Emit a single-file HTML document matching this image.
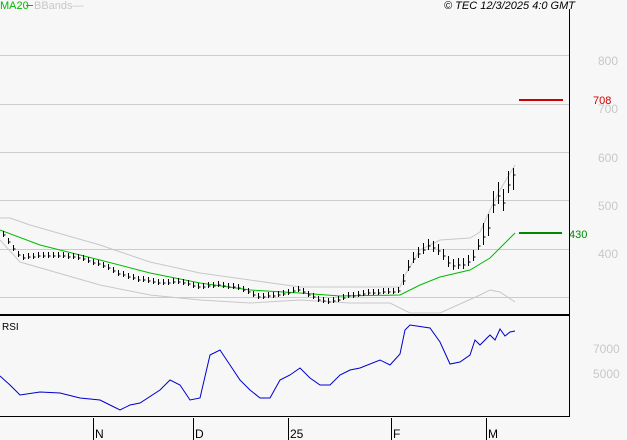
<!DOCTYPE html><html><head><style>body{margin:0;background:#f7f7f7;font-family:"Liberation Sans",sans-serif}svg{display:block}</style></head><body>
<svg width="627" height="440" xmlns="http://www.w3.org/2000/svg" font-family="Liberation Sans, sans-serif" font-size="11">
<rect width="627" height="440" fill="#f7f7f7"/>
<g stroke="#cccccc" stroke-width="1">
<line x1="0" y1="55.5" x2="569" y2="55.5"/><line x1="0" y1="104.5" x2="569" y2="104.5"/><line x1="0" y1="152.5" x2="569" y2="152.5"/><line x1="0" y1="200.5" x2="569" y2="200.5"/><line x1="0" y1="249.5" x2="569" y2="249.5"/><line x1="0" y1="297.5" x2="569" y2="297.5"/>
</g>
<g fill="#c8c8c8" font-size="12"><text x="598" y="65">800</text><text x="598" y="113">700</text><text x="598" y="162">600</text><text x="598" y="210">500</text><text x="598" y="258">400</text><text x="593" y="353">7000</text><text x="593" y="378">5000</text></g>
<text x="0" y="9" fill="#00bb00" font-size="11">MA20</text><line x1="26" y1="5.5" x2="33" y2="5.5" stroke="#00bb00"/><text x="34" y="9" fill="#c8c8c8" font-size="11">BBands—</text>
<text x="575" y="9" text-anchor="end" font-style="italic" font-size="11" fill="#000">© TEC 12/3/2025 4:0 GMT</text>
<polyline fill="none" stroke="#c8c8c8" points="0,218 10,218 30,225 100,245 150,262 200,273 250,280 300,287 350,287 400,287 405,275 420,250 440,240 470,238 480,232 490,210 500,190 515,165"/>
<polyline fill="none" stroke="#c8c8c8" points="0,240 20,262 100,285 150,295 200,300 250,303 300,300 350,303 390,303 410,313 440,313 480,295 490,290 500,292 515,302"/>
<polyline fill="none" stroke="#00bb00" points="0,230 40,245 100,260 150,273 200,283 250,290 300,293 340,296 400,295 420,285 440,277 470,270 490,258 515,233"/>
<path fill="none" stroke="#000" stroke-width="1" d="M3.5 231v6M3.5 235h2M8.5 238v6M8.5 242h2M13.5 245v6M13.5 249h2M18.5 251v6M18.5 255h2M23.5 254v6M23.5 258h2M28.5 253v6M28.5 257h2M33.5 253v6M33.5 257h2M38.5 252v6M38.5 256h2M43.5 252v6M43.5 256h2M48.5 252v6M48.5 256h2M53.5 252v6M53.5 256h2M58.5 252v6M58.5 256h2M63.5 252v6M63.5 256h2M68.5 253v6M68.5 257h2M73.5 253v6M73.5 257h2M78.5 254v6M78.5 258h2M83.5 255v6M83.5 259h2M88.5 257v6M88.5 261h2M93.5 259v6M93.5 263h2M98.5 260v6M98.5 264h2M103.5 262v6M103.5 266h2M108.5 264v6M108.5 268h2M113.5 267v6M113.5 271h2M118.5 270v6M118.5 274h2M123.5 271v6M123.5 275h2M128.5 273v6M128.5 277h2M133.5 274v6M133.5 278h2M138.5 276v6M138.5 280h2M143.5 276v6M143.5 280h2M148.5 277v6M148.5 281h2M153.5 278v6M153.5 282h2M158.5 279v6M158.5 283h2M163.5 279v6M163.5 283h2M168.5 279v6M168.5 283h2M173.5 278v6M173.5 282h2M178.5 278v6M178.5 282h2M183.5 279v6M183.5 283h2M188.5 280v6M188.5 284h2M193.5 282v6M193.5 286h2M198.5 283v6M198.5 287h2M203.5 283v6M203.5 287h2M208.5 282v6M208.5 286h2M213.5 282v6M213.5 286h2M218.5 281v6M218.5 285h2M223.5 282v6M223.5 286h2M228.5 283v6M228.5 287h2M233.5 283v6M233.5 287h2M238.5 284v6M238.5 288h2M243.5 286v6M243.5 290h2M248.5 288v6M248.5 292h2M253.5 291v6M253.5 295h2M258.5 293v6M258.5 297h2M263.5 293v6M263.5 297h2M268.5 292v6M268.5 296h2M273.5 292v6M273.5 296h2M278.5 291v6M278.5 295h2M283.5 290v6M283.5 294h2M288.5 289v6M288.5 293h2M293.5 287v6M293.5 291h2M298.5 286v6M298.5 290h2M303.5 288v6M303.5 292h2M308.5 291v6M308.5 295h2M313.5 293v6M313.5 297h2M318.5 296v6M318.5 300h2M323.5 297v6M323.5 301h2M328.5 298v6M328.5 302h2M333.5 297v6M333.5 301h2M338.5 296v6M338.5 300h2M343.5 294v6M343.5 298h2M348.5 292v6M348.5 296h2M353.5 292v6M353.5 296h2M358.5 291v6M358.5 295h2M363.5 290v6M363.5 294h2M368.5 289v6M368.5 293h2M373.5 289v6M373.5 293h2M378.5 289v6M378.5 293h2M383.5 288v6M383.5 292h2M388.5 288v6M388.5 292h2M393.5 288v6M393.5 292h2M398.5 287v6M398.5 291h2M403.5 274v11M403.5 281h2M408.5 260v11M408.5 267h2M413.5 252v11M413.5 259h2M418.5 247v11M418.5 254h2M423.5 243v11M423.5 250h2M428.5 239v11M428.5 246h2M433.5 241v11M433.5 248h2M438.5 244v11M438.5 251h2M443.5 249v11M443.5 256h2M448.5 256v11M448.5 263h2M453.5 259v11M453.5 266h2M458.5 258v11M458.5 265h2M463.5 258v11M463.5 265h2M468.5 255v11M468.5 262h2M473.5 250v11M473.5 257h2M478.5 239v11M478.5 246h2M483.5 223v22M483.5 237h2M488.5 214v22M488.5 228h2M493.5 191v22M493.5 205h2M498.5 182v22M498.5 196h2M503.5 189v22M503.5 203h2M508.5 171v22M508.5 185h2M513.5 168v22M513.5 175h2"/>
<line x1="519" y1="100" x2="563" y2="100" stroke="#cc0000" stroke-width="2"/><text x="593" y="104" fill="#cc0000" font-size="11">708</text>
<line x1="519" y1="233" x2="562" y2="233" stroke="#008800" stroke-width="2"/><text x="569" y="238" fill="#008800" font-size="11">430</text>
<line x1="569.5" y1="9" x2="569.5" y2="417" stroke="#000"/>
<line x1="0" y1="315" x2="570" y2="315" stroke="#000" stroke-width="2"/>
<line x1="0" y1="416.5" x2="570" y2="416.5" stroke="#000"/>
<text x="2" y="330" font-size="10" fill="#000">RSI</text>
<polyline fill="none" stroke="#0000cc" points="0,376 10,385 20,395 40,392 60,393 80,398 100,400 110,405 120,410 130,405 140,403 160,390 170,380 180,385 190,400 200,398 210,355 220,350 230,365 240,380 250,390 260,398 270,398 280,380 290,375 300,368 310,378 320,385 330,385 340,375 350,370 360,368 380,360 390,365 400,354 405,330 410,325 430,328 440,342 450,364 460,362 470,355 475,340 480,345 490,335 495,340 500,329 505,336 510,332 515,331"/>
<g stroke="#000"><line x1="93.5" y1="418" x2="93.5" y2="440"/><line x1="193.5" y1="418" x2="193.5" y2="440"/><line x1="288.5" y1="418" x2="288.5" y2="440"/><line x1="391.5" y1="418" x2="391.5" y2="440"/><line x1="486.5" y1="418" x2="486.5" y2="440"/></g>
<g font-size="12" fill="#000"><text x="95" y="438">N</text><text x="195" y="438">D</text><text x="290" y="438">25</text><text x="393" y="438">F</text><text x="488" y="438">M</text></g>
</svg></body></html>
